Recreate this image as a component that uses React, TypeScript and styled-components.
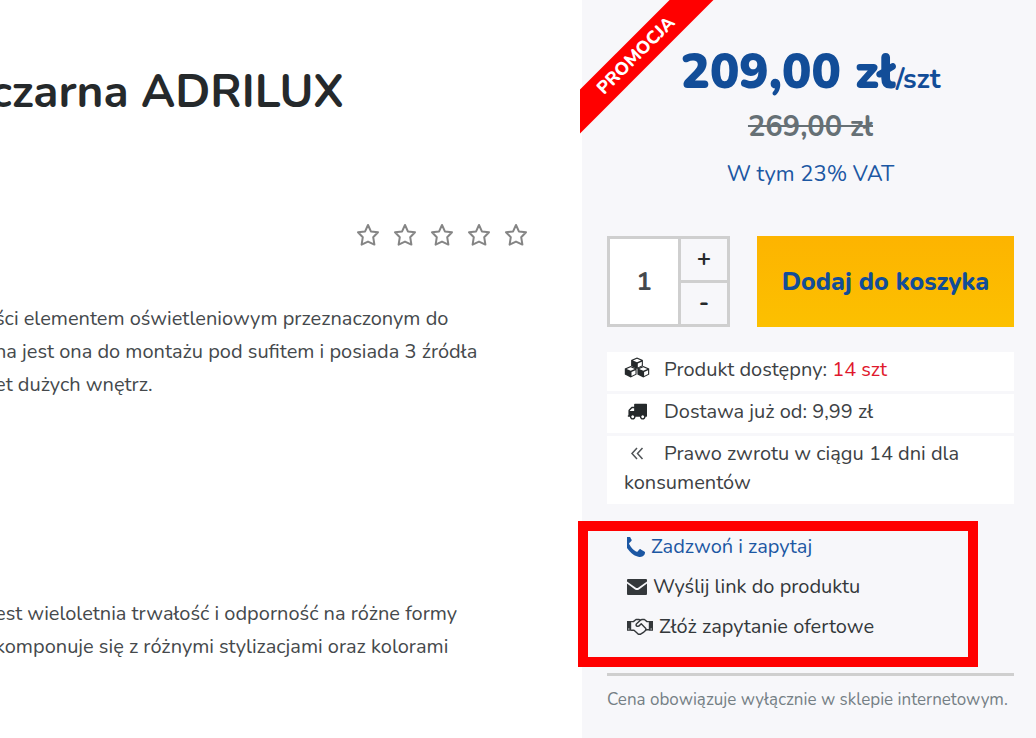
import React from "react";
import styled, { createGlobalStyle } from "styled-components";

const GlobalStyle = createGlobalStyle`
  *, *::before, *::after { box-sizing: border-box; }
  body {
    margin: 0;
    background: #fff;
    color: #25292b;
    font-family: Nunito, Lato, "Open Sans", sans-serif;
    font-size: 20px;
  }
  h1, p, ul { margin: 0; padding: 0; }
  button, input { font: inherit; color: inherit; }
`;

const Page = styled.div`
  display: grid;
  grid-template-columns: minmax(0, 1fr) 454px;
  min-height: 100vh;
`;

const Details = styled.main`
  min-width: 0;
  overflow: hidden;
  padding-top: 62px;
`;

const Title = styled.h1`
  margin-left: -10px;
  font-size: 46px;
  line-height: 60px;
  font-weight: 700;
  white-space: nowrap;
`;

const Rating = styled.div`
  display: flex;
  justify-content: flex-end;
  gap: 13px;
  margin: 101px 54px 0 0;
  svg { display: block; width: 24px; height: 24px; }
`;

const Description = styled.p<{ $gap: number }>`
  margin: ${(p) => p.$gap}px 0 0 -5px;
  font-size: 20px;
  line-height: 33px;
  color: #45494c;
  white-space: nowrap;
`;

const Panel = styled.aside`
  position: relative;
  padding: 42px 22px 24px 25px;
  background: #f7f7fa;
`;

const RibbonCorner = styled.div`
  position: absolute;
  top: 0;
  left: -2px;
  width: 136px;
  height: 136px;
  overflow: hidden;
`;

const Ribbon = styled.span`
  position: absolute;
  top: 40px;
  left: -44px;
  width: 200px;
  transform: rotate(-45deg);
  background: #f00;
  color: #fff;
  font-size: 18px;
  line-height: 31px;
  font-weight: 800;
  text-align: center;
`;

const Price = styled.p`
  color: #124d98;
  font-size: 49px;
  line-height: 60px;
  font-weight: 900;
  text-align: center;
  white-space: nowrap;
`;

const Unit = styled.span`
  font-size: 28px;
  line-height: 28px;
  font-weight: 700;
`;

const OldPrice = styled.p`
  color: #667075;
  font-size: 29px;
  line-height: 50px;
  font-weight: 700;
  text-align: center;
  text-decoration: line-through;
  text-decoration-thickness: 2px;
`;

const Vat = styled.p`
  color: #1c57a3;
  font-size: 22px;
  line-height: 45px;
  text-align: center;
`;

const BuyRow = styled.form`
  display: flex;
  justify-content: space-between;
  height: 91px;
  margin-top: 39px;
`;

const Quantity = styled.div`
  display: grid;
  grid-template-columns: 68px 1fr;
  grid-template-rows: 1fr 1fr;
  gap: 3px;
  width: 123px;
  border: 3px solid #cfcfcf;
  background: #cfcfcf;
`;

const QuantityInput = styled.input`
  grid-row: 1 / 3;
  width: 100%;
  min-width: 0;
  padding: 0;
  border: 0;
  border-radius: 0;
  background: #fff;
  color: #45494c;
  font-size: 26px;
  font-weight: 700;
  text-align: center;
`;

const StepButton = styled.button`
  padding: 0 0 4px;
  border: 0;
  background: #f7f7fa;
  font-size: 24px;
  line-height: 24px;
  font-weight: 700;
  cursor: pointer;
`;

const AddButton = styled.button`
  width: 257px;
  padding: 0;
  border: 0;
  background: linear-gradient(#fdb400, #fcc000);
  color: #124d98;
  font-size: 25px;
  font-weight: 800;
  white-space: nowrap;
  cursor: pointer;
`;

const InfoList = styled.ul`
  display: grid;
  gap: 3px;
  margin-top: 25px;
  list-style: none;
`;

const InfoItem = styled.li`
  padding: 3px 16px 7px 17px;
  background: #fff;
  color: #3d4144;
  font-size: 20px;
  line-height: 29px;
`;

const InfoIcon = styled.span`
  display: inline-block;
  width: 26px;
  margin-right: 14px;
  color: #25292b;
  text-align: center;
  svg { vertical-align: -3px; }
`;

const Stock = styled.span`
  color: #e0182d;
`;

const Contact = styled.div`
  position: relative;
  margin-top: 23px;
  padding-left: 20px;
`;

const Highlight = styled.div`
  position: absolute;
  top: -6px;
  left: -29px;
  width: 400px;
  height: 146px;
  border: 10px solid #f00;
  pointer-events: none;
`;

const ContactLink = styled.a<{ $accent?: boolean }>`
  display: flex;
  align-items: center;
  gap: 6px;
  width: fit-content;
  color: ${(p) => (p.$accent ? "#1c57a3" : "#34383b")};
  font-size: 20px;
  line-height: 40px;
  text-decoration: none;
  white-space: nowrap;
`;

const Note = styled.p`
  margin-top: 26px;
  padding-top: 10px;
  border-top: 3px solid #cfcfcf;
  color: #757f85;
  font-size: 17px;
  line-height: 28px;
  white-space: nowrap;
`;

const Star = () => (
  <svg viewBox="0 0 24 24" fill="none" stroke="#858585" strokeWidth="2" strokeLinejoin="round" aria-hidden="true">
    <path d="M12 2 L14.9 8.4 L22 9.2 L17.2 14.200 L18.400 21.600 L12 18.600 L5.600 21.600 L6.800 14.200 L2 9.200 L9.100 8.400 Z" />
  </svg>
);

const Cube = ({ x, y }: { x: number; y: number }) => (
  <g transform={`translate(${x} ${y})`}>
    <path fill="currentColor" d="M6.5 0 L12.4 2.5 V8.6 L6.5 11.6 L.6 8.6 V2.5 Z" />
    <path fill="#fff" d="M6.5 1.2 L10.6 2.9 L6.5 4.7 L2.4 2.9 Z M7.3 6 L11.3 4.2 V8 L7.3 10 Z" />
  </g>
);

const CubesIcon = () => (
  <svg width="26" height="22" viewBox="0 0 26 22" aria-hidden="true">
    <Cube x={6.5} y={0.5} />
    <Cube x={0.2} y={9} />
    <Cube x={12.8} y={9} />
  </svg>
);

const TruckIcon = () => (
  <svg width="20" height="20" viewBox="0 0 1792 1792" fill="currentColor" aria-hidden="true">
    <path d="M640 1408q0-52-38-90t-90-38-90 38-38 90 38 90 90 38 90-38 38-90zm-384-512h384v-256h-158q-13 0-22 9l-195 195q-9 9-9 22v30zm1280 512q0-52-38-90t-90-38-90 38-38 90 38 90 90 38 90-38 38-90zm256-1088v1024q0 15-4 26.500t-13.500 18.500-16.500 11.500-23.500 6-22.500 2-25.500 0-22.500-.5q0 106-75 181t-181 75-181-75-75-181h-384q0 106-75 181t-181 75-181-75-75-181h-64q-3 0-22.500.5t-25.500 0-22.500-2-23.500-6-16.500-11.500-13.500-18.500-4-26.500q0-26 19-45t45-19v-320q0-8-.5-35t0-38 2.500-34.500 6.500-37 14-30.500 22.500-30l198-198q19-19 50.500-32t58.500-13h160v-192q0-26 19-45t45-19h1024q26 0 45 19t19 45z" />
  </svg>
);

const AngleIcon = () => (
  <svg width="14" height="16" viewBox="0 0 14 16" fill="none" stroke="#505457" strokeWidth="1.500" aria-hidden="true">
    <path d="M7 1 L2 6.500 L7 12 M12.500 1 L7.500 6.500 L12.500 12" />
  </svg>
);

const PhoneIcon = () => (
  <svg width="18" height="20" viewBox="384 256 1216 1280" preserveAspectRatio="none" fill="currentColor" aria-hidden="true">
    <path d="M1600 1240q0 27-10 70.500t-21 68.500q-21 50-122 106-94 51-186 51-27 0-53-3.500t-57.500-12.500-47-14.500-55.500-20.500-49-18q-98-35-175-83-127-79-264-216t-216-264q-48-77-83-175-3-9-18-49t-20.500-55.500-14.500-47-12.500-57.500-3.500-53q0-92 51-186 56-101 106-122 25-11 68.500-21t70.500-10q14 0 21 3 18 6 53 76 11 19 30 54t35 63.500 31 53.500q3 4 17.500 25t21.500 35.500 7 28.500q0 20-28.500 50t-62 55-62 53-28.500 46q0 9 5 22.500t8.500 20.500 14 24 11.500 19q76 137 174 235t235 174q2 1 19 11.500t24 14 20.500 8.500 22.500 5q18 0 46-28.500t53-62 55-62 50-28.500q14 0 28.500 7t35.500 21.500 25 17.500q25 15 53.500 31t63.500 35 54 30q70 35 76 53 3 7 3 21z" />
  </svg>
);

const EnvelopeIcon = () => (
  <svg width="20" height="16" viewBox="0 0 20 16" fill="currentColor" aria-hidden="true">
    <path d="M1 0 H19 Q20 0 20 1 V2.400 L11.500 8.500 Q10 9.500 8.500 8.500 L0 2.400 V1 Q0 0 1 0 Z" />
    <path d="M0 4.500 L8 10.400 Q10 11.600 12 10.400 L20 4.500 V15 Q20 16 19 16 H1 Q0 16 0 15 Z" />
  </svg>
);

const HandshakeIcon = () => (
  <svg width="26" height="18" viewBox="0 0 26 18" fill="none" stroke="currentColor" strokeWidth="1.400" strokeLinejoin="round" strokeLinecap="round" aria-hidden="true">
    <path fill="currentColor" stroke="none" d="M0 3 H4.200 V12.800 H0 Z M21.800 3 H26 V12.800 H21.800 Z" />
    <path stroke="#f7f7fa" strokeWidth="1" d="M1.600 11 H2 M24 11 H24.400" />
    <path d="M4.500 3.600 H6.400 L9 1.500 H11.800 L13.400 2.200 L15 1.500 H17.400 L20 3.600 H21.500" />
    <path d="M13.400 2.200 L9.300 6 Q8.600 7.600 10.200 8.300 Q11.800 8.600 13 7 L14.200 5.800 L18.800 10.400 Q19.600 11.600 18.400 12.600 L16.400 14.400 L13.600 16.200 Q12 16.600 10.600 15.600 L7 12.200 H4.500" />
    <path d="M18.800 11.800 H21.500" />
  </svg>
);

export default function App() {
  return (
    <>
      <GlobalStyle />
      <Page>
        <Details>
          <Title>czarna ADRILUX</Title>
          <Rating role="img" aria-label="Ocena produktu">
            {[1, 2, 3, 4, 5].map((n) => (
              <Star key={n} />
            ))}
          </Rating>
          <Description $gap={55}>
            ści elementem oświetleniowym przeznaczonym do
            <br />
            na jest ona do montażu pod sufitem i posiada 3 źródła
            <br />
            et dużych wnętrz.
          </Description>
          <Description $gap={196}>
            est wieloletnia trwałość i odporność na różne formy
            <br />
            komponuje się z różnymi stylizacjami oraz kolorami
          </Description>
        </Details>

        <Panel>
          <RibbonCorner>
            <Ribbon>PROMOCJA</Ribbon>
          </RibbonCorner>
          <Price>
            209,00 zł<Unit>/szt</Unit>
          </Price>
          <OldPrice>269,00 zł</OldPrice>
          <Vat>W tym 23% VAT</Vat>

          <BuyRow onSubmit={(e) => e.preventDefault()}>
            <Quantity>
              <QuantityInput type="text" defaultValue="1" aria-label="Ilość" />
              <StepButton type="button">+</StepButton>
              <StepButton type="button">-</StepButton>
            </Quantity>
            <AddButton type="submit">Dodaj do koszyka</AddButton>
          </BuyRow>

          <InfoList>
            <InfoItem>
              <InfoIcon><CubesIcon /></InfoIcon>
              Produkt dostępny: <Stock>14 szt</Stock>
            </InfoItem>
            <InfoItem>
              <InfoIcon><TruckIcon /></InfoIcon>
              Dostawa już od: 9,99 zł
            </InfoItem>
            <InfoItem>
              <InfoIcon><AngleIcon /></InfoIcon>
              Prawo zwrotu w ciągu 14 dni dla konsumentów
            </InfoItem>
          </InfoList>

          <Contact>
            <ContactLink href="#telefon" $accent>
              <PhoneIcon />
              Zadzwoń i zapytaj
            </ContactLink>
            <ContactLink href="#link">
              <EnvelopeIcon />
              Wyślij link do produktu
            </ContactLink>
            <ContactLink href="#oferta">
              <HandshakeIcon />
              Złóż zapytanie ofertowe
            </ContactLink>
            <Highlight />
          </Contact>

          <Note>Cena obowiązuje wyłącznie w sklepie internetowym.</Note>
        </Panel>
      </Page>
    </>
  );
}
